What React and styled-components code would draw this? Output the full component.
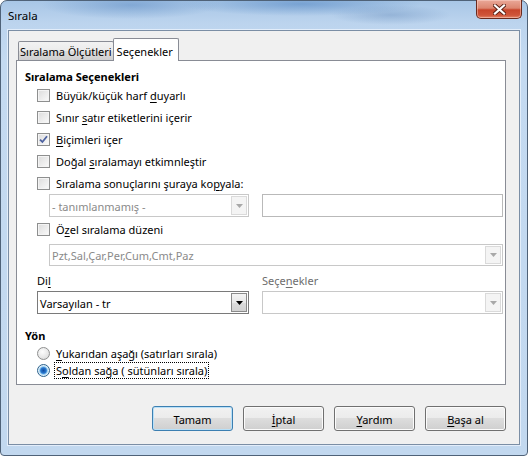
import React from 'react';
import styled, { createGlobalStyle } from 'styled-components';

const GlobalStyle = createGlobalStyle`
  html, body { margin: 0; padding: 0; background: #fff; }
  body {
    font-family: "Noto Sans", "Open Sans", sans-serif;
    font-size: 11px;
    color: #000;
  }
  * { box-sizing: border-box; }
`;

const Window = styled.div`
  width: 528px;
  height: 456px;
  display: flex;
  flex-direction: column;
  padding: 0 7px 10px;
  border: 1px solid #4f6278;
  border-radius: 7px 7px 4px 4px;
  background:
    radial-gradient(ellipse 90px 14px at 130px 4px, rgba(80, 130, 190, 0.45), transparent),
    radial-gradient(ellipse 120px 12px at 300px 3px, rgba(70, 125, 190, 0.5), transparent),
    radial-gradient(ellipse 60px 10px at 390px 14px, rgba(90, 130, 180, 0.35), transparent),
    linear-gradient(to bottom, #a8c6e6 0, #bcd4ee 22px, #c4daf1 60px, #c2d8ef 100%);
`;

const TitleBar = styled.div`
  height: 29px;
  display: flex;
  justify-content: space-between;
  align-items: flex-start;
`;

const TitleText = styled.div`
  padding-top: 6px;
  line-height: 17px;
  font-size: 11.5px;
`;

const CloseButton = styled.div`
  width: 46px;
  height: 19px;
  margin-top: -1px;
  margin-right: -2px;
  border: 1px solid #6a2a1e;
  border-top: none;
  border-radius: 0 0 5px 5px;
  background: linear-gradient(to bottom, #eaa898 0, #dc8670 45%, #c8452b 55%, #cf553a 85%, #e4876b 100%);
  box-shadow: inset 0 0 0 1px rgba(255, 220, 210, 0.45);
  display: flex;
  align-items: center;
  justify-content: center;
`;

const Content = styled.div`
  flex: 1;
  display: flex;
  flex-direction: column;
  padding: 7px 13px 0 7px;
  background: #f0f0f0;
  border: 1px solid #7b8ea5;
  box-shadow: 0 0 0 1px rgba(235, 243, 252, 0.8);
`;

const TabStrip = styled.div`
  height: 22px;
  display: flex;
  align-items: flex-end;
  padding-left: 2px;
`;

const Tab = styled.div`
  height: ${(p) => (p.active ? '23px' : '19px')};
  margin-bottom: ${(p) => (p.active ? '-1px' : '0')};
  margin-left: ${(p) => (p.active ? '-1px' : '0')};
  position: relative;
  z-index: ${(p) => (p.active ? 1 : 0)};
  padding: ${(p) => (p.active ? '2px 5px 0 3px' : '0 1px 0 1px')};
  line-height: ${(p) => (p.active ? '21px' : '19px')};
  border: 1px solid #898c95;
  border-bottom: none;
  border-radius: 2px 2px 0 0;
  background: ${(p) =>
    p.active ? '#fff' : 'linear-gradient(to bottom, #f2f2f2 0, #ebebeb 50%, #dddddd 50%, #cfcfcf 100%)'};
  white-space: nowrap;
`;

const Panel = styled.div`
  height: 325px;
  display: flex;
  flex-direction: column;
  padding: 7px 0 0 8px;
  background: #fff;
  border: 1px solid #898c95;
`;

const Heading = styled.div`
  height: 16px;
  line-height: 17px;
  font-weight: 700;
  margin-top: ${(p) => p.top || 0}px;
`;

const Group = styled.div`
  display: flex;
  flex-direction: column;
  padding-left: 12px;
`;

const OptionRow = styled.div`
  height: ${(p) => p.h || 22}px;
  margin-top: ${(p) => p.top || 0}px;
  display: flex;
  align-items: center;
  gap: 4px;
  white-space: nowrap;
`;

const Box = styled.div`
  width: 13px;
  height: 13px;
  flex: none;
  border: 1px solid #8e8f8f;
  background: linear-gradient(135deg, #dcdcdc 0, #eeeeee 60%, #fbfbfb 100%);
  box-shadow: inset 0 0 0 1px #f4f4f4;
  display: flex;
  align-items: center;
  justify-content: center;
`;

const Radio = styled.div`
  width: 13px;
  height: 13px;
  flex: none;
  border-radius: 50%;
  border: 1px solid ${(p) => (p.checked ? '#2c628b' : '#8e8f8f')};
  background: ${(p) =>
    p.checked
      ? 'radial-gradient(circle at 50% 50%, #0f4aa0 0, #2b79cf 2.8px, #9bd1f3 4px, #dfeefa 4.8px, #f4f8fb 100%)'
      : 'radial-gradient(circle at 40% 35%, #fdfdfd 0, #e6e6e6 60%, #d0d0d0 100%)'};
`;

const Label = styled.span`
  color: ${(p) => (p.disabled ? '#6d6d6d' : '#000')};
  padding: 1px 1px 0;
  line-height: 14px;
  border: 1px ${(p) => (p.focused ? 'dotted #000' : 'solid transparent')};
`;

const U = styled.span`
  text-decoration: underline;
  text-underline-offset: 2px;
`;

const FieldRow = styled.div`
  display: flex;
  gap: 13px;
  margin-top: ${(p) => p.top || 0}px;
  margin-left: ${(p) => p.left || 0}px;
`;

const Combo = styled.div`
  width: ${(p) => p.w}px;
  height: ${(p) => p.h || 23}px;
  flex: none;
  display: flex;
  align-items: center;
  padding: 0 1px 0 2px;
  background: #fff;
  border: 1px solid ${(p) => (p.disabled ? '#c8c8c8' : '#7a7a7a')};
  color: ${(p) => (p.disabled ? '#8a8a8a' : '#000')};
  white-space: nowrap;
`;

const ComboText = styled.span`
  flex: 1;
  padding-top: 1px;
`;

const Arrow = styled.div`
  width: 16px;
  height: ${(p) => (p.short ? 18 : 19)}px;
  flex: none;
  border: 1px solid ${(p) => (p.disabled ? '#dadada' : '#8a8a8a')};
  background: ${(p) =>
    p.disabled ? '#f4f4f4' : 'linear-gradient(to bottom, #f4f4f4 0, #e8e8e8 50%, #dcdcdc 50%, #d2d2d2 100%)'};
  display: flex;
  align-items: center;
  justify-content: center;
`;

const TextField = styled.div`
  width: ${(p) => p.w}px;
  height: 23px;
  flex: none;
  background: #fff;
  border: 1px solid #b9b9b9;
`;

const LabelRow = styled.div`
  display: flex;
  gap: 13px;
  height: 16px;
  line-height: 17px;
  margin-top: 6px;
`;

const FieldLabel = styled.div`
  width: ${(p) => p.w}px;
  color: ${(p) => (p.disabled ? '#6d6d6d' : '#000')};
`;

const ButtonRow = styled.div`
  display: flex;
  justify-content: flex-end;
  gap: 10px;
  margin-top: 21px;
`;

const Button = styled.div`
  width: 81px;
  height: 25px;
  display: flex;
  align-items: center;
  justify-content: center;
  padding-top: 1px;
  border: 1px solid ${(p) => (p.primary ? '#3c7fb1' : '#707070')};
  border-radius: 3px;
  background: linear-gradient(to bottom, #f2f2f2 0, #ebebeb 50%, #dddddd 50%, #cfcfcf 100%);
  box-shadow: inset 0 0 0 1px ${(p) => (p.primary ? '#b8e0f8' : '#fbfbfb')};
`;

const CheckMark = () => (
  <svg width="9" height="9" viewBox="0 0 9 9">
    <path d="M1 4.6 L3.4 7 L8 1.2" fill="none" stroke="#4d62a0" strokeWidth="1.8" />
  </svg>
);

const DownArrow = ({ disabled }) => (
  <svg width="7" height="4" viewBox="0 0 7 4">
    <path d="M0 0 H7 L3.5 4 Z" fill={disabled ? '#a8a8a8' : '#000'} />
  </svg>
);

const CloseGlyph = () => (
  <svg width="13" height="11" viewBox="0 0 13 11">
    <path d="M2 1.5 L11 9.5 M11 1.5 L2 9.5" stroke="#5a2015" strokeWidth="4" strokeLinecap="square" />
    <path d="M2 1.5 L11 9.5 M11 1.5 L2 9.5" stroke="#fff" strokeWidth="2.2" strokeLinecap="square" />
  </svg>
);

const Check = ({ checked, children }) => (
  <OptionRow>
    <Box>{checked && <CheckMark />}</Box>
    <Label>{children}</Label>
  </OptionRow>
);

export default function App() {
  return (
    <>
      <GlobalStyle />
      <Window>
        <TitleBar>
          <TitleText>Sırala</TitleText>
          <CloseButton>
            <CloseGlyph />
          </CloseButton>
        </TitleBar>
        <Content>
          <TabStrip>
            <Tab>Sıralama Ölçütleri</Tab>
            <Tab active>Seçenekler</Tab>
          </TabStrip>
          <Panel>
            <Heading>Sıralama Seçenekleri</Heading>
            <Group>
              <Check>
                Büyük/küçük harf <U>d</U>uyarlı
              </Check>
              <Check>
                Sınır <U>s</U>atır etiketlerini içerir
              </Check>
              <Check checked>
                <U>B</U>içimleri içer
              </Check>
              <Check>
                Doğal <U>s</U>ıralamayı etkimnleştir
              </Check>
              <Check>
                Sıralama sonuçlarını şuraya ko<U>p</U>yala:
              </Check>
              <FieldRow left={12}>
                <Combo w={200} disabled>
                  <ComboText>- tanımlanmamış -</ComboText>
                  <Arrow disabled>
                    <DownArrow disabled />
                  </Arrow>
                </Combo>
                <TextField w={241} />
              </FieldRow>
              <OptionRow top={1}>
                <Box />
                <Label>
                  Ö<U>z</U>el sıralama düzeni
                </Label>
              </OptionRow>
              <FieldRow left={12} top={4}>
                <Combo w={454} h={22} disabled>
                  <ComboText>Pzt,Sal,Çar,Per,Cum,Cmt,Paz</ComboText>
                  <Arrow disabled short>
                    <DownArrow disabled />
                  </Arrow>
                </Combo>
              </FieldRow>
              <LabelRow>
                <FieldLabel w={212}>
                  Di<U>l</U>
                </FieldLabel>
                <FieldLabel w={241} disabled>
                  Seçe<U>n</U>ekler
                </FieldLabel>
              </LabelRow>
              <FieldRow top={3}>
                <Combo w={212}>
                  <ComboText>Varsayılan - tr</ComboText>
                  <Arrow>
                    <DownArrow />
                  </Arrow>
                </Combo>
                <Combo w={241} disabled>
                  <ComboText />
                  <Arrow disabled>
                    <DownArrow disabled />
                  </Arrow>
                </Combo>
              </FieldRow>
            </Group>
            <Heading top={13}>Yön</Heading>
            <Group>
              <OptionRow h={17} top={2}>
                <Radio />
                <Label>
                  <U>Y</U>ukarıdan aşağı (satırları sırala)
                </Label>
              </OptionRow>
              <OptionRow h={17}>
                <Radio checked />
                <Label focused>
                  S<U>o</U>ldan sağa ( sütünları sırala)
                </Label>
              </OptionRow>
            </Group>
          </Panel>
          <ButtonRow>
            <Button primary>Tamam</Button>
            <Button>
              <span>
                <U>İ</U>ptal
              </span>
            </Button>
            <Button>
              <span>
                <U>Y</U>ardım
              </span>
            </Button>
            <Button>
              <span>
                <U>B</U>aşa al
              </span>
            </Button>
          </ButtonRow>
        </Content>
      </Window>
    </>
  );
}
